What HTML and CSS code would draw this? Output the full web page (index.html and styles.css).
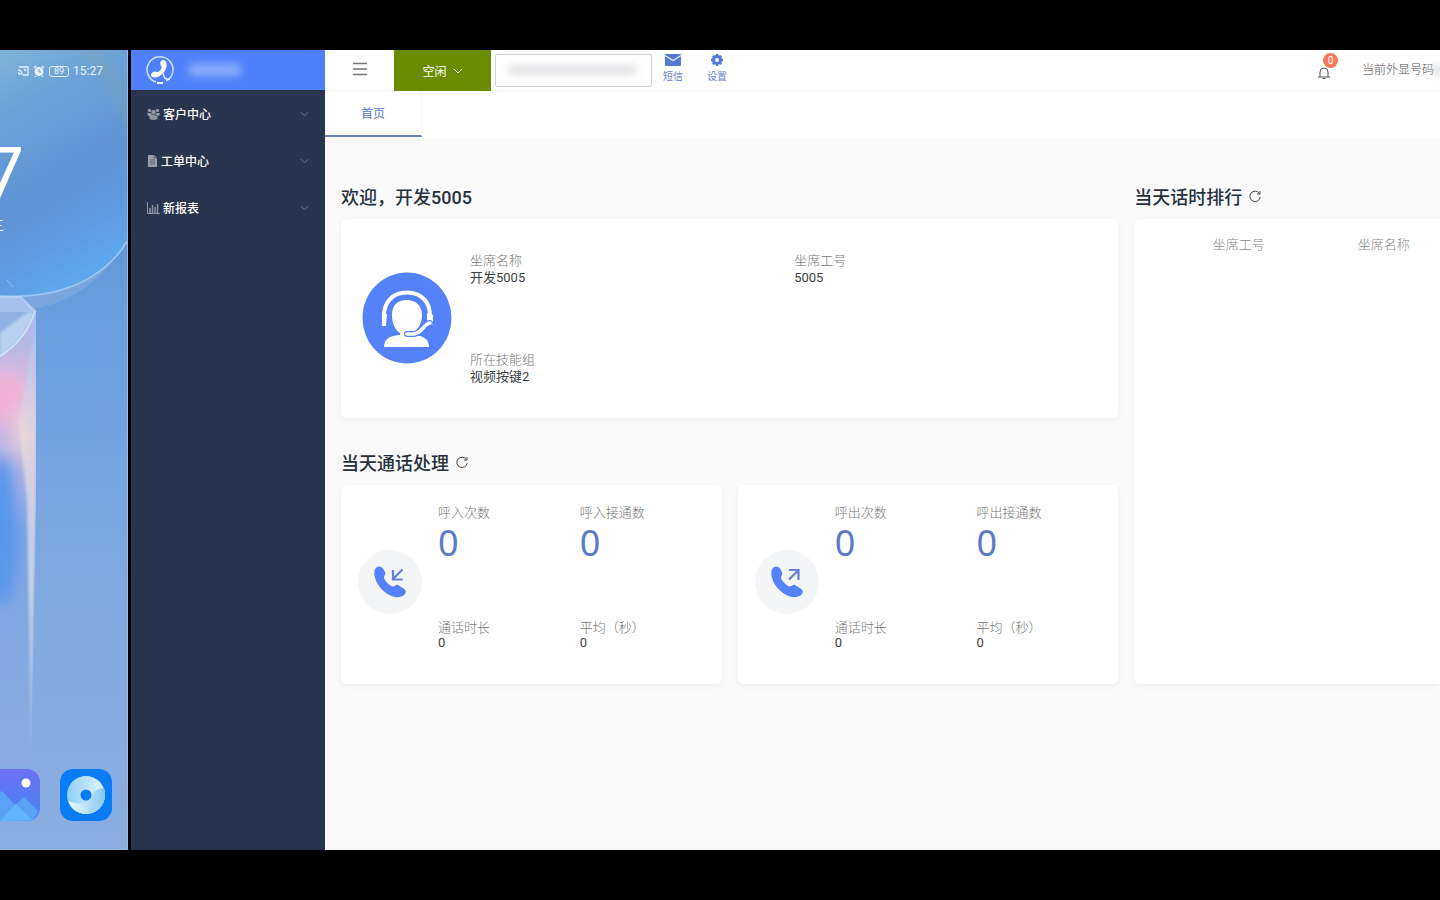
FILE: index.html
```html
<!DOCTYPE html>
<html lang="zh-CN">
<head>
<meta charset="utf-8">
<title>首页</title>
<link rel="stylesheet" href="styles.css">
</head>
<body>
<svg class="sprite" aria-hidden="true">
  <symbol id="chevron" viewBox="0 0 10 6"><path d="M1 1l4 4 4-4" fill="none" stroke="currentColor"/></symbol>
  <symbol id="refresh" viewBox="0 0 14 14"><path d="M11.400 4.500A5.200 5.200 0 1 0 12.200 8M12 2v3H9" fill="none" stroke="currentColor"/></symbol>
  <symbol id="handset" viewBox="0 0 32 32"><path d="M2.500 1.500c2.500-2 5-1 6.500 1l2 3.500c1.200 2.500-1.500 4-1 6 1 3 5.500 7.500 8.500 8.500 2 .500 3-2.500 5.500-1.500l5.500 3.500c2.500 1.700 3 4 1 6-3.500 3.500-9.500 3.500-15 .500C8 25.500 1.500 17 .500 9.500 0 5.500.500 3 2.500 1.500z" fill="currentColor"/></symbol>
</svg>
<div class="stage">
  <aside class="phone">
    <svg class="wallpaper" viewBox="0 0 128 800" preserveAspectRatio="none" aria-hidden="true">
      <defs>
        <linearGradient id="sky" x1="0" y1="0" x2="0" y2="1"><stop offset="0" stop-color="#75a4cf"/><stop offset=".15" stop-color="#5a92d3"/><stop offset=".35" stop-color="#6b9fdf"/><stop offset=".65" stop-color="#7ea9e0"/><stop offset="1" stop-color="#89ade1"/></linearGradient>
        <linearGradient id="orb" x1="0" y1="0" x2=".3" y2="1"><stop offset="0" stop-color="#80b4d6"/><stop offset=".25" stop-color="#6ba3d9"/><stop offset=".6" stop-color="#5f93d4"/><stop offset=".85" stop-color="#5f9ae0"/><stop offset="1" stop-color="#5fa6ea"/></linearGradient>
        <linearGradient id="beam" x1="0" y1="0" x2="0" y2="1"><stop offset="0" stop-color="#a6c2ee"/><stop offset=".1" stop-color="#b5b8e6"/><stop offset=".2" stop-color="#e9b9dc"/><stop offset=".32" stop-color="#bdb6e6"/><stop offset=".5" stop-color="#7ba4e6"/><stop offset="1" stop-color="#8cace0"/></linearGradient>
        <linearGradient id="edge" x1="0" y1="0" x2="0" y2="1"><stop offset="0" stop-color="#a9c6ef"/><stop offset=".25" stop-color="#e3d6de"/><stop offset=".6" stop-color="#cfd9e6"/><stop offset="1" stop-color="#9dbbe9"/></linearGradient>
        <filter id="soft" x="-100%" y="-50%" width="300%" height="200%"><feGaussianBlur stdDeviation="7"/></filter>
        <filter id="faint"><feGaussianBlur stdDeviation="1.500"/></filter>
        <clipPath id="column"><path d="M0 246l22 1 14 13v200L31 715H0z"/></clipPath>
      </defs>
      <rect width="128" height="800" fill="url(#sky)"/>
      <path d="M0 0h88c24 14 38 40 40 66v120c-14 30-48 68-98 73L0 249z" fill="#7ba5dd"/>
      <path d="M0 0h128v190C108 224 66 250 0 246z" fill="url(#orb)"/>
      <path d="M84 -4C108 14 122 40 132 80" fill="none" stroke="#8aa3a9" stroke-width="10" opacity=".45" filter="url(#soft)"/>
      <path d="M128 190C108 224 66 250 0 246" fill="none" stroke="#9dc8f2" stroke-width="1.500"/>
      <path d="M7 230l6 7" stroke="#8fc4f0"/>
      <g clip-path="url(#column)">
        <rect y="246" width="40" height="480" fill="url(#beam)"/>
        <path d="M36 275v185L31 715 27 450 18 370z" fill="url(#edge)" opacity=".85" filter="url(#faint)"/>
        <ellipse cx="2" cy="480" rx="14" ry="75" fill="#5796ea" filter="url(#soft)"/>
        <ellipse cx="6" cy="348" rx="13" ry="26" fill="#f3b1d2" filter="url(#soft)"/>
        <ellipse cx="20" cy="382" rx="6" ry="28" fill="#f3dcd6" opacity=".8" filter="url(#soft)"/>
      </g>
      <path d="M0 262h34C27 284 14 298 0 306z" fill="#8fb2e2"/>
      <path d="M0 283L28 262l6 0Q26 290 0 306z" fill="#b8d1f0" filter="url(#faint)"/>
      <path d="M35 261Q26 290 0 306" fill="none" stroke="#d3e2f6" stroke-width="1.500"/>
      <path d="M0 247h21l12 14" fill="none" stroke="#c3dcf8"/>
      <path d="M127.500 0v800M0 799.500h128" stroke="#a4b8da"/>
    </svg>
    <div class="phone-ui">
      <header class="status">
        <svg width="13" height="12" viewBox="0 0 13 12" fill="none" stroke="currentColor" stroke-width="1.300" aria-hidden="true"><path d="M3 2h9v8H7M2 5c3 0 4 2 4 5M2 8q2 0 2 2M8 4l2 2"/></svg>
        <svg width="12" height="12" viewBox="0 0 12 12" aria-hidden="true"><circle cx="6" cy="6.500" r="4.500" fill="currentColor"/><path d="M1 3l2-2M11 3L9 1M3 11l-1 1M9 11l1 1" stroke="currentColor" stroke-width="1.500"/><path d="M6 4v3h2" fill="none" stroke="#6b9fd2"/></svg>
        <span class="battery">89</span>
        <time>15:27</time>
      </header>
      <div class="clock"><span>7</span></div>
      <div class="weekday"><span>星期三</span></div>
      <nav class="dock">
        <svg class="app-icon" viewBox="0 0 52 52" role="img" aria-label="图库"><defs><linearGradient id="gal" x2="0" y2="1"><stop stop-color="#6d70f4"/><stop offset="1" stop-color="#4286f3"/></linearGradient></defs><rect width="52" height="52" rx="13" fill="url(#gal)"/><path d="M0 31L14 22 27 36 36 28 50 42Q48 52 38 52H13Q0 52 0 38z" fill="#5ba2f7"/><path d="M12 52l16-17 16 16z" fill="#62b4fc"/><circle cx="38" cy="14" r="4.500" fill="#fff"/></svg>
        <svg class="app-icon" viewBox="0 0 52 52" role="img" aria-label="浏览器"><defs><linearGradient id="disc" x2="1" y2="0"><stop stop-color="#8fcff9"/><stop offset="1" stop-color="#e3f5fd"/></linearGradient><linearGradient id="swirl" x2="1" y2="0"><stop stop-color="#eefafe"/><stop offset="1" stop-color="#86c8f6"/></linearGradient></defs><rect width="52" height="52" rx="13" fill="#087bf5"/><circle cx="26" cy="26" r="19" fill="url(#disc)"/><path d="M8 32c7 3 14 3 18 1 7-3 5-13 18-14 4 12-4 26-18 26-8 0-15-5-18-13z" fill="url(#swirl)"/><circle cx="26" cy="26" r="5.500" fill="#087bf5"/></svg>
      </nav>
    </div>
  </aside>

  <aside class="sidebar">
    <div class="brand">
      <svg width="30" height="30" viewBox="0 0 30 30" aria-hidden="true"><path d="M11 27A13 13 0 1 1 21 26.200" fill="none" stroke="#cfe0ff" stroke-width="1.500"/><path d="M16 6c2-2 5-.500 5.500 2.500 1 6-4 12.500-10.500 14-3 .500-5.500-1-5-3 .300-1.500 3-3.500 4.500-3 1.500.600 2 1 3 .300 2-1.300 3-3 3.200-5-1-1-2.200-4-.700-5.800z" fill="#fff"/><path d="M18.500 18.500c-.500 4 2.500 6.500 6 5.500" fill="none" stroke="#e6efff" stroke-width="1.500"/><path d="M12 28h6" stroke="#fff" stroke-width="2"/></svg>
      <span class="brand-name" aria-hidden="true"></span>
    </div>
    <nav class="menu">
      <button type="button"><svg width="13" height="12" viewBox="0 0 13 12" fill="#8f959f" aria-hidden="true"><circle cx="2.500" cy="2.500" r="1.800"/><circle cx="10.500" cy="2.500" r="1.800"/><circle cx="6.500" cy="4" r="2.300"/><path d="M0 5h4l1 2-2 1H1zM13 5H9L8 7l2 1h2zM2.500 7.500q4-2 8 0v3.500q-4 2-8 0z"/></svg><span>客户中心</span><svg class="chev" aria-hidden="true"><use href="#chevron"/></svg></button>
      <button type="button"><svg width="11" height="12" viewBox="0 0 11 12" aria-hidden="true"><path d="M1 0h6l3 3v9H1z" fill="#9a9fa8"/><path d="M3 5h5M3 7h5M3 9h5M7 0v3h3" fill="none" stroke="#5d6575"/></svg><span>工单中心</span><svg class="chev" aria-hidden="true"><use href="#chevron"/></svg></button>
      <button type="button"><svg width="13" height="12" viewBox="0 0 13 12" fill="none" stroke="#8f959f" aria-hidden="true"><path d="M.5 0v11.500H13"/><path d="M3 11V6M5.500 11V3M8 11V5M10.500 11V2" stroke-width="1.500"/></svg><span>新报表</span><svg class="chev" aria-hidden="true"><use href="#chevron"/></svg></button>
    </nav>
  </aside>

  <main class="main">
    <header class="topbar">
      <button class="fold" type="button" aria-label="折叠菜单"><svg width="14" height="14" viewBox="0 0 14 14" aria-hidden="true"><path d="M0 1.500h14M0 7h14M0 12.500h14" stroke="#777" stroke-width="1.300"/></svg></button>
      <button class="state" type="button">空闲<svg width="10" height="6" aria-hidden="true"><use href="#chevron"/></svg></button>
      <div class="field"><input type="text" aria-label="号码"><span class="field-blur" aria-hidden="true"></span></div>
      <button class="tool" type="button"><svg width="16" height="12" viewBox="0 0 16 12" aria-hidden="true"><rect width="16" height="12" rx="1" fill="#5478d6"/><path d="M0 1.500l8 5 8-5" fill="none" stroke="#e6edff" stroke-width="1.300"/></svg>短信</button>
      <button class="tool" type="button"><svg width="12" height="12" viewBox="0 0 12 12" aria-hidden="true"><circle cx="6" cy="6" r="3.500" fill="none" stroke="#5478d6" stroke-width="3"/><path d="M6 0v12M0 6h12M1.800 1.800l8.400 8.400M10.200 1.800l-8.400 8.400" stroke="#5478d6" stroke-width="2.400"/><circle cx="6" cy="6" r="2" fill="#fff"/></svg>设置</button>
      <button class="bell" type="button" aria-label="通知"><svg width="12" height="12" viewBox="0 0 12 12" fill="none" stroke="#555" aria-hidden="true"><path d="M0 10h12M2 10V5q0-4 4-4t4 4v5M4.500 11.500h3"/></svg><span class="badge">0</span></button>
      <span class="caller">当前外显号码</span><span class="caller-blur" aria-hidden="true"></span>
    </header>
    <nav class="tabs"><a href="#home">首页</a></nav>
    <div class="dash" id="home">
      <div class="left">
        <section>
          <h2>欢迎，开发5005</h2>
          <div class="card profile">
            <svg class="avatar" viewBox="0 0 90 92" aria-hidden="true"><ellipse cx="45" cy="46" rx="44.500" ry="45.500" fill="#5582f8"/><path d="M22 46C21 31 30 20.500 45 20.500S69 31 68 46" fill="none" stroke="#fff" stroke-width="4"/><path d="M20 42h5l-1 12h-4zM65 41l6 2v10h-6z" fill="#fff"/><path d="M30 43c0-10 6-15 14.500-15S60 33 60 43c0 8-4 15-9 18v5H38v-5c-5-3-8-10-8-18z" fill="#fff"/><path d="M22 75c0-9 7-11 15-12h15c8 1 15 3 15 12z" fill="#fff"/><path d="M68 51c-7 1-7 10-16 11h-7" fill="none" stroke="#5582f8" stroke-width="6" stroke-linecap="round"/><path d="M68 51c-7 1-7 10-16 11h-7" fill="none" stroke="#fff" stroke-width="3.600" stroke-linecap="round"/></svg>
            <dl class="facts">
              <div><dt>坐席名称</dt><dd>开发5005</dd></div>
              <div><dt>坐席工号</dt><dd>5005</dd></div>
              <div><dt>所在技能组</dt><dd>视频按键2</dd></div>
            </dl>
          </div>
        </section>
        <section>
          <h2>当天通话处理<button class="reload" type="button" aria-label="刷新"><svg width="14" height="14"><use href="#refresh"/></svg></button></h2>
          <div class="calls">
            <div class="card call">
              <span class="disc"><svg width="32" height="32" viewBox="0 0 32 32" aria-hidden="true"><use href="#handset"/><path d="M28.500 3.500L19.500 12.500M19 4v9.500h9.500" fill="none" stroke="#6484d8" stroke-width="2.200"/></svg></span>
              <dl class="stats">
                <div><dt>呼入次数</dt><dd class="big">0</dd></div>
                <div><dt>呼入接通数</dt><dd class="big">0</dd></div>
                <div><dt>通话时长</dt><dd>0</dd></div>
                <div><dt>平均（秒）</dt><dd>0</dd></div>
              </dl>
            </div>
            <div class="card call">
              <span class="disc"><svg width="32" height="32" viewBox="0 0 32 32" aria-hidden="true"><use href="#handset"/><path d="M18 13.500l9-9M18 4h9.500v10" fill="none" stroke="#6484d8" stroke-width="2.200"/></svg></span>
              <dl class="stats">
                <div><dt>呼出次数</dt><dd class="big">0</dd></div>
                <div><dt>呼出接通数</dt><dd class="big">0</dd></div>
                <div><dt>通话时长</dt><dd>0</dd></div>
                <div><dt>平均（秒）</dt><dd>0</dd></div>
              </dl>
            </div>
          </div>
        </section>
      </div>
      <section class="rank">
        <h2>当天话时排行<button class="reload" type="button" aria-label="刷新"><svg width="14" height="14"><use href="#refresh"/></svg></button></h2>
        <div class="card rank-card">
          <table><thead><tr><th scope="col">坐席工号</th><th scope="col">坐席名称</th></tr></thead></table>
        </div>
      </section>
    </div>
  </main>
</div>
</body>
</html>
```

FILE: styles.css
```css
* { box-sizing: border-box; }
body {
  margin: 0;
  background: #000;
  color: #3c3f44;
  font-family: Roboto, "Noto Sans CJK SC", sans-serif;
  font-size: 13px;
}
button { border: 0; padding: 0; background: none; font: inherit; color: inherit; }
h2, dl, dd { margin: 0; }
.sprite { position: absolute; width: 0; height: 0; }
.stage { display: flex; min-height: 100vh; padding: 50px 0; }

/* phone */
.phone { position: relative; flex: none; width: 128px; margin-right: 3px; overflow: hidden; color: #fff; }
.wallpaper { position: absolute; inset: 0; width: 100%; height: 100%; }
.phone-ui { position: relative; display: flex; flex-direction: column; height: 100%; }
.status { display: flex; align-items: center; justify-content: flex-end; gap: 4px; height: 42px; padding-right: 25px; color: #e6f0fa; font-size: 12px; }
.battery { width: 20px; border: 1px solid; border-radius: 3px; font-size: 9px; line-height: 9px; text-align: center; }
.clock { display: flex; justify-content: flex-end; width: 24px; height: 68px; margin-top: 40px; font-size: 72px; line-height: 86px; }
.weekday { display: flex; justify-content: flex-end; width: 4px; margin-top: 16px; font-size: 14px; line-height: 18px; white-space: nowrap; }
.dock { display: flex; justify-content: flex-end; gap: 20px; margin-top: auto; padding: 0 16px 29px 0; }
.app-icon { flex: none; width: 52px; height: 52px; }

/* sidebar */
.sidebar { flex: none; width: 194px; background: #29344d; }
.brand { display: flex; align-items: center; gap: 14px; height: 40px; padding-left: 14px; background: #4e80fb; }
.brand-name { width: 52px; height: 12px; border-radius: 4px; background: #8fb0fd; filter: blur(4px); }
.menu { display: flex; flex-direction: column; }
.menu button { display: flex; align-items: center; gap: 3px; height: 47px; padding: 0 16px; color: #fff; font-size: 12px; font-weight: 500; }
.chev { width: 9px; height: 6px; margin-left: auto; color: #7b8496; }

/* top bar */
.main { flex: 1; min-width: 0; overflow: hidden; background: #fafafb; }
.topbar { display: flex; height: 41px; background: #fff; border-bottom: 1px solid #f3f3f5; white-space: nowrap; }
.fold { display: flex; align-items: center; justify-content: center; width: 69px; height: 38px; }
.state { display: flex; align-items: center; justify-content: center; gap: 6px; width: 97px; height: 41px; background: #6b8c00; color: #fff; font-size: 12px; }
.field { position: relative; width: 157px; margin: 4px 6px 0 4px; }
.field input { width: 100%; height: 33px; border: 1px solid #cfcfd3; border-radius: 2px; background: #fff; }
.field-blur { position: absolute; left: 14px; right: 16px; top: 12px; height: 8px; background: #dcdcdf; filter: blur(4px); }
.tool { display: flex; flex-direction: column; align-items: center; gap: 2px; width: 30px; margin-right: 14px; padding-top: 4px; color: #6482cc; font-size: 10px; line-height: 18px; }
.bell { position: relative; align-self: center; height: 12px; margin-left: auto; }
.badge { position: absolute; left: 5px; top: -14px; width: 15px; height: 15px; border-radius: 50%; background: #f57a5a; color: #fff; font-size: 10px; line-height: 15px; text-align: center; }
.topbar .bell { margin-top: 6px; }
.caller { margin-left: 32px; color: #555; font-size: 12px; font-weight: 300; line-height: 41px; }
.caller-blur { width: 6px; height: 12px; margin-top: 14px; background: #dcdcde; filter: blur(3px); }

.tabs { display: flex; height: 47px; background: #fff; }
.tabs a { width: 97px; height: 46px; border-right: 1px solid #f3f3f5; border-bottom: 2px solid #6580bd; color: #5b78bd; font-size: 12px; line-height: 46px; text-align: center; text-decoration: none; }

/* dashboard */
.dash { display: grid; grid-template-columns: minmax(0, 778fr) minmax(0, 306fr); gap: 16px; padding: 42px 0 0 16px; }
.left { display: flex; flex-direction: column; gap: 28px; }
h2 { display: flex; align-items: center; gap: 6px; height: 34px; padding-bottom: 2px; margin-bottom: 5px; color: #26313d; font-size: 18px; font-weight: 500; white-space: nowrap; }
.reload { height: 14px; color: #444; }
.reload svg { display: block; }
.card { border-radius: 6px; background: #fff; box-shadow: 0 2px 6px rgba(0, 0, 0, .05); }
dt { color: #777; font-weight: 300; line-height: 18px; }
dd { line-height: 16px; }
.profile { display: flex; align-items: center; gap: 18px; height: 199px; padding: 0 0 2px 21px; }
.avatar { flex: none; width: 90px; height: 92px; }
.facts { display: grid; grid-template-columns: 1fr 1fr; grid-auto-rows: 99px; flex: 1; align-self: flex-start; padding-top: 33px; }
.calls { display: grid; grid-template-columns: 1fr 1fr; gap: 16px; }
.call { display: flex; align-items: center; gap: 16px; height: 199px; padding: 0 0 6px 17px; }
.disc { display: grid; place-items: center; flex: none; width: 64px; height: 64px; border-radius: 50%; background: #f4f5f6; color: #5582f8; }
.stats { display: grid; grid-template-columns: 1fr 1fr; grid-auto-rows: 115px; flex: 1; align-self: flex-start; padding-top: 19px; }
.stats dd { line-height: 12px; }
.stats dd.big { color: #5b7bc8; font-family: "Noto Sans", sans-serif; font-size: 36px; line-height: 42px; }
.rank { display: flex; flex-direction: column; }
.rank-card { flex: 1; padding: 16px 0 0 32px; border-radius: 6px 0 0 6px; }
table { border-collapse: collapse; }
th { width: 145px; min-width: 145px; padding: 0; color: #888; font-size: 13px; font-weight: 300; line-height: 20px; text-align: center; }
```
